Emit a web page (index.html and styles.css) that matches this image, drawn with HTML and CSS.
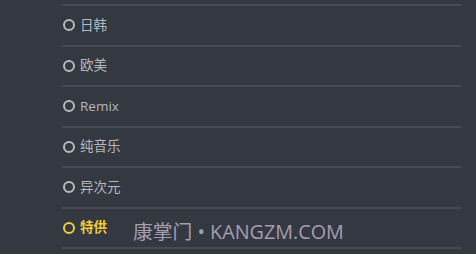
FILE: index.html
```
<!DOCTYPE html>
<html lang="zh">
<head>
<meta charset="utf-8">
<link rel="stylesheet" href="styles.css">
</head>
<body>
<div class="page">
  <ul class="list">
    <li class="row row-cut"></li>
    <li class="row"><span class="dot"></span><span class="label">日韩</span></li>
    <li class="row"><span class="dot"></span><span class="label">欧美</span></li>
    <li class="row"><span class="dot"></span><span class="label">Remix</span></li>
    <li class="row"><span class="dot"></span><span class="label">纯音乐</span></li>
    <li class="row"><span class="dot"></span><span class="label">异次元</span></li>
    <li class="row active"><span class="dot"></span><span class="label">特供</span></li>
  </ul>
  <div class="watermark">康掌门 • KANGZM.COM</div>
</div>
</body>
</html>
```
FILE: styles.css
```
html, body {
  margin: 0;
  padding: 0;
  background: #343840;
  width: 476px;
  height: 254px;
  overflow: hidden;
}
.page {
  position: relative;
  width: 476px;
  height: 254px;
  font-family: "Open Sans", "Noto Sans CJK SC", sans-serif;
}
.list {
  list-style: none;
  margin: 0;
  padding: 0 15px 0 62px;
}
.row {
  height: 38.5px;
  border-bottom: 2px solid #474b53;
  display: flex;
  align-items: center;
  gap: 5px;
  color: #b6b9bf;
  font-size: 13.5px;
}
.row-cut {
  height: 4px;
}
.dot {
  width: 8px;
  height: 8px;
  border: 2px solid #b6b9bf;
  border-radius: 50%;
  margin-left: 1px;
}
.label {
  line-height: 1;
  font-family: "Open Sans", "Noto Sans CJK SC", sans-serif;
}
.active {
  color: #f2cc3c;
  font-weight: 700;
}
.active .dot {
  border-color: #f2cc3c;
}
.watermark {
  position: absolute;
  left: 133px;
  top: 218px;
  font-family: "Open Sans", "Noto Sans CJK SC", sans-serif;
  font-size: 19.8px;
  color: #a49db2;
  white-space: nowrap;
  line-height: 28px;
}
```
